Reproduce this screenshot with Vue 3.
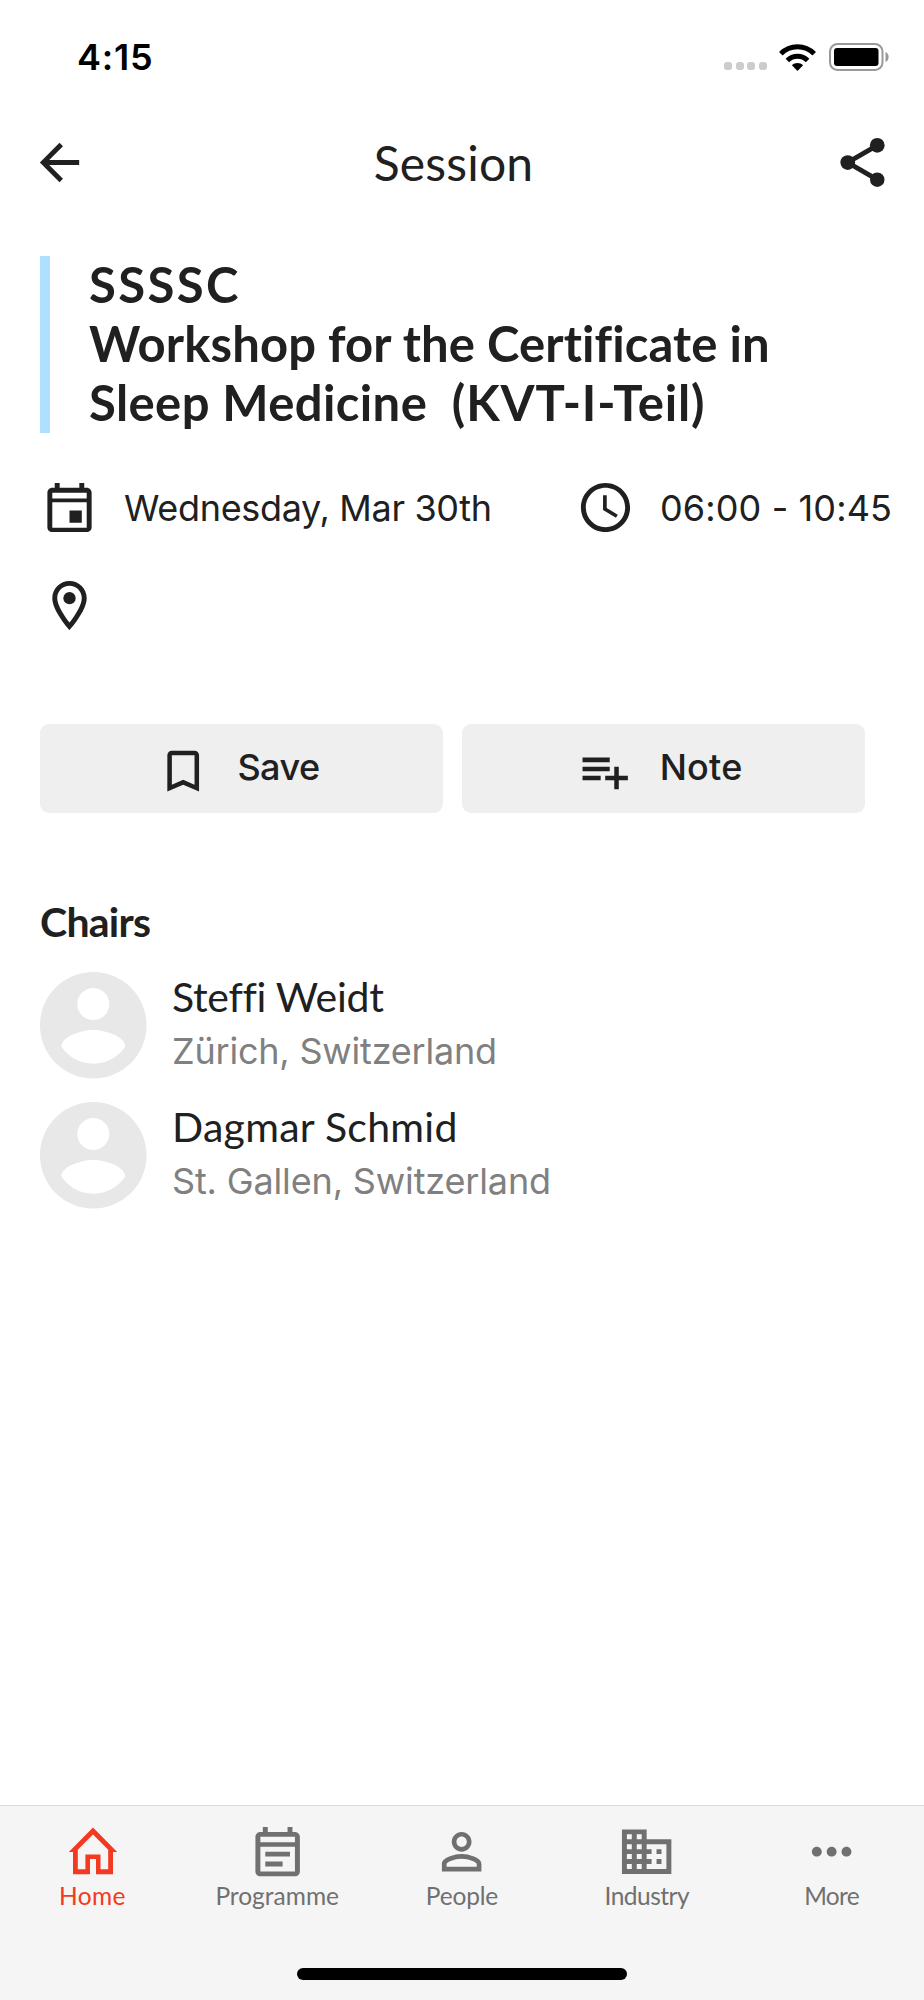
<script setup>
const chairs = [
  { name: 'Steffi Weidt', place: 'Zürich, Switzerland', cls: 'first' },
  { name: 'Dagmar Schmid', place: 'St. Gallen, Switzerland', cls: 'second' },
]

const tabs = [
  {
    id: 'home',
    label: 'Home',
    box: '0 0 59.3 59.3',
    path: 'M30 5.6L54.2 29.9H50V52.2H33V37H27V52.2H10V29.9H5.8ZM30 12.6L14.8 27.8V47.3H22.4V32.4H37.5V47.3H45.2V27.8Z',
  },
  {
    id: 'programme',
    label: 'Programme',
    box: '0 0 24 24',
    path: 'M19 4h-1V2h-2v2H8V2H6v2H5c-1.11 0-1.99.9-1.99 2L3 20c0 1.1.89 2 2 2h14c1.1 0 2-.9 2-2V6c0-1.1-.9-2-2-2zm0 16H5V10h14v10zm0-11.8H5V6h14v2.2zM7 12h10v2H7zM7 16h7v2H7z',
  },
  {
    id: 'attendees',
    label: 'People',
    box: '0 0 24 24',
    path: 'M12 5.9c1.16 0 2.1.94 2.1 2.1s-.94 2.1-2.1 2.1S9.9 9.16 9.9 8s.94-2.1 2.1-2.1m0 9c2.97 0 6.1 1.46 6.1 2.1v1.1H5.9V17c0-.64 3.13-2.1 6.1-2.1M12 4C9.79 4 8 5.79 8 8s1.79 4 4 4 4-1.79 4-4-1.79-4-4-4zm0 9c-2.67 0-8 1.34-8 4v3h16v-3c0-2.66-5.33-4-8-4z',
  },
  {
    id: 'industry',
    label: 'Industry',
    box: '0 0 24 24',
    path: 'M12 7V3H2v18h20V7H12zM6 19H4v-2h2v2zm0-4H4v-2h2v2zm0-4H4V9h2v2zm0-4H4V5h2v2zm4 12H8v-2h2v2zm0-4H8v-2h2v2zm0-4H8V9h2v2zm0-4H8V5h2v2zm10 12h-8v-2h2v-2h-2v-2h2v-2h-2V9h8v10zm-2-8h-2v2h2v-2zm0 4h-2v2h2v-2z',
  },
  {
    id: 'more',
    label: 'More',
    box: '0 0 24 24',
    path: 'M6 10c-1.1 0-2 .9-2 2s.9 2 2 2 2-.9 2-2-.9-2-2-2zm12 0c-1.1 0-2 .9-2 2s.9 2 2 2 2-.9 2-2-.9-2-2-2zm-6 0c-1.1 0-2 .9-2 2s.9 2 2 2 2-.9 2-2-.9-2-2-2z',
  },
]
</script>

<template>
  <div class="screen">
    <div class="status">
      <span class="time">4:15</span>
      <div class="indicators">
        <div class="dots"><i></i><i></i><i></i><i></i></div>
        <svg class="wifi" viewBox="0 0 37 27">
          <path d="M18.5 27L12.9 21.3C16 18.2 21 18.2 24.1 21.3Z" />
          <path d="M8.4 16.4C14 10.8 23 10.8 28.6 16.4" fill="none" stroke="#000" stroke-width="5" />
          <path d="M1.8 9.7C11 .3 26 .3 35.2 9.7" fill="none" stroke="#000" stroke-width="5" />
        </svg>
        <svg class="battery" viewBox="0 0 61 28">
          <rect x="1" y="1" width="52.5" height="26" rx="7.5" fill="none" stroke="#999" stroke-width="2" />
          <rect x="5" y="5" width="44.5" height="18" rx="3" />
          <path d="M56.5 9C60.7 10.8 60.7 17.2 56.5 19Z" fill="#999" />
        </svg>
      </div>
    </div>

    <header class="header">
      <svg class="icon" viewBox="0 0 24 24">
        <path d="M20 11H7.83l5.59-5.59L12 4l-8 8 8 8 1.41-1.41L7.83 13H20v-2z" />
      </svg>
      <span class="heading">Session</span>
      <svg class="icon" viewBox="0 0 24 24">
        <path d="M18 5L6 12L18 19" fill="none" stroke="#202020" stroke-width="2" />
        <circle cx="6" cy="12" r="3" />
        <circle cx="18" cy="5" r="3" />
        <circle cx="18" cy="19" r="2.95" />
      </svg>
    </header>

    <section class="session">
      <h1 class="title">
        <span class="line code">SSSSC</span>
        <span class="line topic">Workshop for the Certificate in</span>
        <span class="line part">Sleep Medicine&nbsp; <span class="module">(KVT-I-Teil)</span></span>
      </h1>
    </section>

    <section class="meta">
      <div class="fact">
        <svg class="icon" viewBox="0 0 24 24">
          <path d="M19 4h-1V2h-2v2H8V2H6v2H5c-1.11 0-1.99.9-1.99 2L3 20c0 1.1.89 2 2 2h14c1.1 0 2-.9 2-2V6c0-1.1-.9-2-2-2zm0 16.2H5V9.9h14v10.3zm0-11.9H5V6h14v2.3zM12 13.2h5v5h-5z" />
        </svg>
        <span class="date">Wednesday, Mar 30th</span>
      </div>
      <div class="fact">
        <svg class="icon" viewBox="0 0 24 24">
          <path d="M11.99 2C6.47 2 2 6.48 2 12s4.47 10 9.99 10C17.52 22 22 17.52 22 12S17.52 2 11.99 2zM12 20c-4.42 0-8-3.58-8-8s3.58-8 8-8 8 3.58 8 8-3.58 8-8 8zm.5-13H11v6l5.25 3.15.75-1.23-4.5-2.67z" />
        </svg>
        <span class="hours">06:00 - 10:45</span>
      </div>
      <div class="fact">
        <svg class="icon" viewBox="0 0 24 24">
          <path d="M12 2C8.13 2 5 5.13 5 9c0 5.25 7 13 7 13s7-7.75 7-13c0-3.87-3.13-7-7-7zM7 9c0-2.76 2.24-5 5-5s5 2.24 5 5c0 2.88-2.88 7.19-5 9.88C9.92 16.21 7 11.85 7 9z" />
          <circle cx="12" cy="9" r="2.5" />
        </svg>
      </div>
    </section>

    <section class="actions">
      <button class="action save">
        <svg viewBox="0 0 24 24">
          <path d="M17 3H7c-1.1 0-1.99.9-1.99 2L5 21l7-3 7 3V5c0-1.1-.9-2-2-2zm0 15l-5-2.18L7 18V5h10v13z" />
        </svg>
        <span>Save</span>
      </button>
      <button class="action note">
        <svg viewBox="0 0 24 24">
          <path d="M14 10H2v2h12v-2zm0-4H2v2h12V6zm4 8v-4h-2v4h-4v2h4v4h2v-4h4v-2h-4zM2 16h8v-2H2v2z" />
        </svg>
        <span>Note</span>
      </button>
    </section>

    <section class="chairs">
      <h2 class="subheading">Chairs</h2>
      <ul class="people">
        <li v-for="chair in chairs" :key="chair.name" class="person" :class="chair.cls">
          <svg class="avatar" viewBox="2 2 20 20">
            <path d="M12 2C6.48 2 2 6.48 2 12s4.48 10 10 10 10-4.48 10-10S17.52 2 12 2zm0 3c1.66 0 3 1.34 3 3s-1.34 3-3 3-3-1.34-3-3 1.34-3 3-3zm0 14.2c-2.5 0-4.71-1.28-6-3.22.03-1.99 4-3.08 6-3.08 1.99 0 5.97 1.09 6 3.08-1.29 1.94-3.5 3.22-6 3.22z" />
          </svg>
          <div class="who">
            <div class="name">{{ chair.name }}</div>
            <div class="place">{{ chair.place }}</div>
          </div>
        </li>
      </ul>
    </section>

    <nav class="tabbar">
      <div class="tabs">
        <div v-for="tab in tabs" :key="tab.id" class="tab" :class="tab.id">
          <svg :viewBox="tab.box"><path :d="tab.path" fill-rule="evenodd" /></svg>
          <span>{{ tab.label }}</span>
        </div>
      </div>
      <div class="grip"></div>
    </nav>
  </div>
</template>

<style>
html,
body {
  background: #fff;
}
</style>

<style scoped>
.screen {
  width: 924px;
  height: 2000px;
  display: flex;
  flex-direction: column;
  background: #fff;
  color: #202020;
  font-family: Lato, sans-serif;
  font-variant-ligatures: none;
  white-space: nowrap;
  overflow: hidden;
}

svg {
  display: block;
  flex: none;
  fill: currentColor;
}

.status {
  height: 114px;
  flex: none;
  display: flex;
  justify-content: space-between;
  align-items: center;
  padding: 0 34px 0 77px;
  color: #000;
}

.time {
  font: 600 36px/44px Inter, sans-serif;
  letter-spacing: 0.8px;
}

.indicators {
  display: flex;
  align-items: center;
}

.dots {
  display: flex;
  gap: 3.6px;
  margin: 18px 12px 0 0;
}

.dots i {
  width: 8px;
  height: 8px;
  border-radius: 3px;
  background: #ccc;
}

.wifi {
  width: 37px;
  height: 27px;
  margin-right: 13px;
}

.battery {
  width: 61px;
  height: 28px;
}

.header {
  height: 97px;
  flex: none;
  display: flex;
  justify-content: space-between;
  align-items: center;
  padding: 0 32px 0 30px;
}

.icon {
  width: 59px;
  height: 59px;
}

.heading {
  font-size: 48px;
  line-height: 58px;
  letter-spacing: 0.16px;
  margin: 0 15px 0 0;
}

.session {
  height: 177px;
  flex: none;
  margin: 45px 0 0 40px;
  padding-left: 39px;
  border-left: 10px solid #b0e0ff;
}

.title {
  margin: -1px 0 0;
  font-size: 49px;
  line-height: 59.2px;
  font-weight: 700;
}

.line {
  display: block;
}

.code {
  letter-spacing: 2.35px;
}

.topic {
  letter-spacing: 0.1px;
}

.part {
  letter-spacing: 0.4px;
}

.module {
  letter-spacing: 0.85px;
}

.meta {
  display: grid;
  grid-template-columns: 536px 1fr;
  row-gap: 39.4px;
  margin: 45px 0 0 40px;
  font: 400 36px/44px Inter, sans-serif;
}

.fact {
  display: flex;
  align-items: center;
  gap: 25px;
}

.date {
  letter-spacing: -0.32px;
}

.hours {
  letter-spacing: 0.12px;
}

.actions {
  display: flex;
  gap: 19.6px;
  margin: 88.6px 0 0 40px;
}

.action {
  width: 402.7px;
  height: 89px;
  display: flex;
  align-items: center;
  gap: 27px;
  padding: 0 0 0 116px;
  border: 0;
  border-radius: 9px;
  background: #efefef;
  color: #202020;
  font: 500 36px/44px Inter, sans-serif;
}

.action svg {
  width: 54.4px;
  height: 54.4px;
  margin-top: 5px;
}

.action span {
  margin-bottom: 2px;
}

.save {
  letter-spacing: -0.55px;
}

.note {
  letter-spacing: 0.21px;
}

.chairs {
  margin: 84px 0 0 40px;
}

.subheading {
  margin: 0;
  font-size: 41px;
  line-height: 50px;
  font-weight: 700;
  letter-spacing: -0.74px;
}

.people {
  list-style: none;
  margin: 25px 0 0;
  padding: 0;
  display: flex;
  flex-direction: column;
  gap: 23.4px;
}

.person {
  height: 106.6px;
  display: flex;
  gap: 25.4px;
}

.avatar {
  width: 106.6px;
  height: 106.6px;
  color: #e8e8e8;
}

.who {
  margin-top: 0;
}

.name {
  font-size: 41px;
  line-height: 50px;
}

.place {
  font: 400 36px/60px Inter, sans-serif;
  margin-top: -0.6px;
  color: #808080;
}

.first .name {
  letter-spacing: -0.3px;
}

.first .place {
  letter-spacing: -0.21px;
}

.second .name {
  letter-spacing: 0.28px;
}

.second .place {
  letter-spacing: -0.15px;
}

.tabbar {
  height: 195px;
  box-sizing: border-box;
  margin-top: auto;
  display: flex;
  flex-direction: column;
  align-items: center;
  padding: 16.4px 0 20px;
  border-top: 1px solid #dcdcdc;
  background: #f5f5f5;
}

.tabs {
  width: 100%;
  display: grid;
  grid-template-columns: repeat(5, 1fr);
}

.tab {
  display: flex;
  flex-direction: column;
  align-items: center;
  color: #707070;
}

.tab svg {
  width: 59.3px;
  height: 59.3px;
}

.tab span {
  margin-top: -0.6px;
  font-size: 24.5px;
  line-height: 30px;
}

.tab.home {
  color: #f33a20;
}

.home span {
  letter-spacing: 0.4px;
}

.attendees span {
  letter-spacing: -0.18px;
}

.industry span {
  letter-spacing: -0.5px;
}

.more span {
  letter-spacing: -0.73px;
}

.grip {
  width: 330px;
  height: 12px;
  margin-top: auto;
  border-radius: 6px;
  background: #000;
}
</style>
